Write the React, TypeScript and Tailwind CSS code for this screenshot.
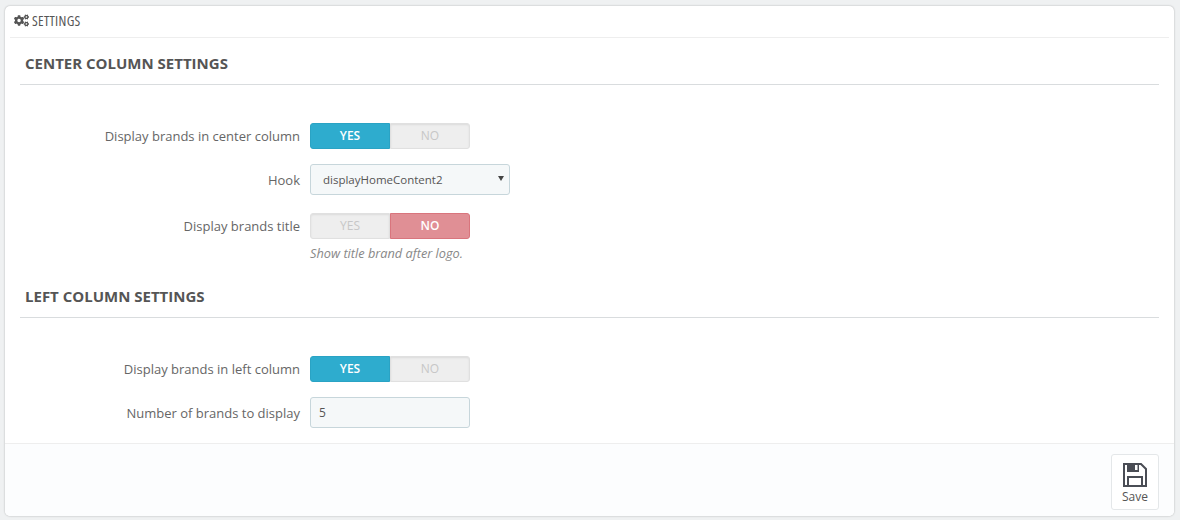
import React from 'react';
import { FaCogs } from 'react-icons/fa';

const Toggle: React.FC<{ on: boolean }> = ({ on }) => (
    <div className="flex h-[26px] w-[160px] text-[12px] font-semibold leading-[24px] text-center">
        <div
            className={
                on
                    ? 'w-[80px] rounded-l-[3px] border border-[#2aa3c4] bg-[#2eacce] text-white'
                    : 'w-[80px] rounded-l-[3px] border border-[#e0e0e0] bg-[#eeeeee] text-[#c7c7c7] font-normal shadow-[inset_0_1px_2px_rgba(0,0,0,0.08)]'
            }
        >
            YES
        </div>
        <div
            className={
                on
                    ? 'w-[80px] rounded-r-[3px] border border-[#e0e0e0] bg-[#eeeeee] text-[#c7c7c7] font-normal shadow-[inset_0_1px_2px_rgba(0,0,0,0.08)]'
                    : 'w-[80px] rounded-r-[3px] border border-[#d9757d] bg-[#e08f95] text-white'
            }
        >
            NO
        </div>
    </div>
);

const Row: React.FC<{ label: string; className?: string; children: React.ReactNode }> = ({ label, className, children }) => (
    <div className={`flex items-center ${className ?? ''}`}>
        <label className="w-[295px] pt-[2px] text-right text-[13px] text-[#666666]">{label}</label>
        <div className="ml-[10px]">{children}</div>
    </div>
);

const SectionTitle: React.FC<{ title: string }> = ({ title }) => (
    <h4 className="mx-[15px] h-[47px] border-b border-[#d9dcde] pl-[5px] pt-[15px] text-[15px] font-bold leading-[20px] text-[#555555]">
        {title}
    </h4>
);

export default function App() {
    return (
        <div className="h-[520px] w-[1180px] overflow-hidden bg-[#eff1f2] pl-[5px] pr-[5px] pt-[6px] font-['Open_Sans',sans-serif]">
            <div className="flex h-[510px] w-[1169px] flex-col rounded-[5px] bg-white shadow-[0_0_2px_rgba(0,0,0,0.3)]">
                <div className="mx-[5px] flex h-[32px] items-center border-b border-[#eeeeee] pb-[2px] pl-[4px] text-[#555555]">
                    <FaCogs className="h-[15px] w-[15px]" />
                    <span className="ml-[3px] text-[14px] tracking-[0.3px] [font-stretch:75%]">SETTINGS</span>
                </div>

                <div className="flex-1">
                    <SectionTitle title="CENTER COLUMN SETTINGS" />
                    <Row label="Display brands in center column" className="mt-[38px]">
                        <Toggle on />
                    </Row>
                    <Row label="Hook" className="mt-[15px]">
                        <div className="relative flex h-[31px] w-[200px] items-center rounded-[3px] border border-[#c7d6db] bg-[#f5f8f9] pl-[12px] text-[11.5px] text-[#555555]">
                            displayHomeContent2
                            <span className="absolute right-[5px] top-[11px] h-0 w-0 border-x-[3px] border-t-[5px] border-x-transparent border-t-[#444444]" />
                        </div>
                    </Row>
                    <Row label="Display brands title" className="mt-[18px]">
                        <Toggle on={false} />
                    </Row>
                    <p className="ml-[305px] mt-[6px] text-[12.75px] italic leading-[16px] text-[#888888]">Show title brand after logo.</p>

                    <div className="mt-[10px]">
                        <SectionTitle title="LEFT COLUMN SETTINGS" />
                    </div>
                    <Row label="Display brands in left column" className="mt-[38px]">
                        <Toggle on />
                    </Row>
                    <Row label="Number of brands to display" className="mt-[15px]">
                        <div className="flex h-[31px] w-[160px] items-center rounded-[3px] border border-[#c7d6db] bg-[#f5f8f9] pl-[8px] pt-[1px] text-[12px] text-[#555555]">
                            5
                        </div>
                    </Row>
                </div>

                <div className="flex h-[73px] justify-end rounded-b-[5px] border-t border-[#eeeeee] bg-[#fcfdfe] pr-[15px] pt-[10px]">
                    <button className="flex h-[56px] w-[48px] flex-col items-center rounded-[3px] border border-[#e4e7e9] bg-white pt-[8px] text-[12px] leading-[16px] text-[#555555]">
                        <svg viewBox="0 0 24 24" className="h-[24px] w-[24px]" fill="none" stroke="#4a4d55" strokeWidth="2">
                            <path d="M1 1h17l5 5v17H1z" />
                            <path d="M4 1h12v8H4z" fill="#4a4d55" stroke="none" />
                            <path d="M12 2h2.500v5H12z" fill="#ffffff" stroke="none" />
                            <path d="M5 23V14h14v9" />
                        </svg>
                        <span className="mt-[2px]">Save</span>
                    </button>
                </div>
            </div>
        </div>
    );
}
